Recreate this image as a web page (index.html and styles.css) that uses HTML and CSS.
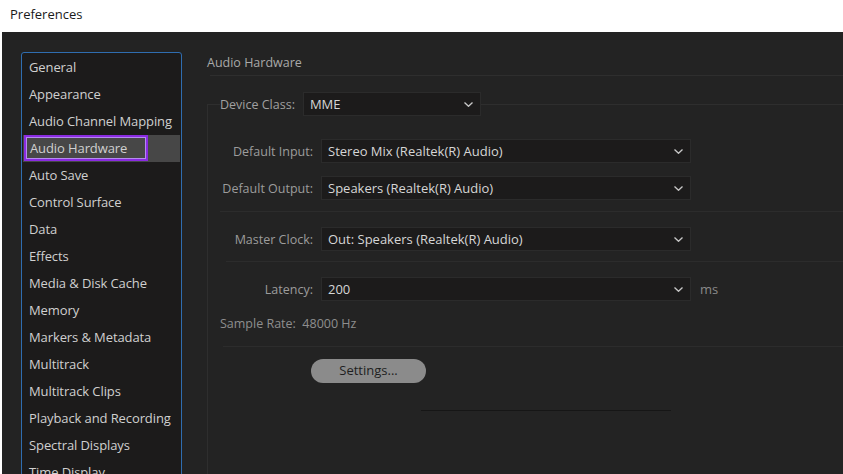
FILE: index.html
```html
<!DOCTYPE html>
<html>
<head>
<meta charset="utf-8">
<link rel="stylesheet" href="styles.css">
</head>
<body>
<div class="titlebar">Preferences</div>
<div class="window">
  <div class="sidebar">
    <ul class="nav">
      <li>General</li>
      <li>Appearance</li>
      <li>Audio Channel Mapping</li>
      <li class="selected"><span class="focus">Audio Hardware</span></li>
      <li>Auto Save</li>
      <li>Control Surface</li>
      <li>Data</li>
      <li>Effects</li>
      <li>Media &amp; Disk Cache</li>
      <li>Memory</li>
      <li>Markers &amp; Metadata</li>
      <li>Multitrack</li>
      <li>Multitrack Clips</li>
      <li>Playback and Recording</li>
      <li>Spectral Displays</li>
      <li>Time Display</li>
    </ul>
  </div>
  <div class="main">
    <div class="header">Audio Hardware</div>
    <fieldset class="group">
      <legend class="device">
        <span class="dlabel">Device Class:</span>
        <span class="select small"><span class="val">MME</span><svg class="chev" viewBox="0 0 9 5"><path d="M0.5 0.5 L4.5 4.3 L8.5 0.5"/></svg></span>
      </legend>
      <div class="row r-input">
        <span class="label">Default Input:</span>
        <span class="select"><span class="val">Stereo Mix (Realtek(R) Audio)</span><svg class="chev" viewBox="0 0 9 5"><path d="M0.5 0.5 L4.5 4.3 L8.5 0.5"/></svg></span>
      </div>
      <div class="row r-output">
        <span class="label">Default Output:</span>
        <span class="select"><span class="val">Speakers (Realtek(R) Audio)</span><svg class="chev" viewBox="0 0 9 5"><path d="M0.5 0.5 L4.5 4.3 L8.5 0.5"/></svg></span>
      </div>
      <div class="sep s1"></div>
      <div class="row r-clock">
        <span class="label">Master Clock:</span>
        <span class="select"><span class="val">Out: Speakers (Realtek(R) Audio)</span><svg class="chev" viewBox="0 0 9 5"><path d="M0.5 0.5 L4.5 4.3 L8.5 0.5"/></svg></span>
      </div>
      <div class="sep s2"></div>
      <div class="row r-latency">
        <span class="label">Latency:</span>
        <span class="select"><span class="val">200</span><svg class="chev" viewBox="0 0 9 5"><path d="M0.5 0.5 L4.5 4.3 L8.5 0.5"/></svg></span>
        <span class="unit">ms</span>
      </div>
      <div class="rate">Sample Rate:&nbsp; 48000 Hz</div>
      <div class="sep s3"></div>
      <div class="btnrow"><span class="btn">Settings...</span></div>
      <div class="darkline"></div>
    </fieldset>
  </div>
</div>
</body>
</html>
```
FILE: styles.css
```css
html, body {
  margin: 0;
  padding: 0;
  background: #ffffff;
  overflow: hidden;
  width: 843px;
  height: 474px;
}
body {
  font-family: "Open Sans", "Liberation Sans", sans-serif;
}
.titlebar {
  height: 32px;
  box-sizing: border-box;
  padding: 5px 0 0 10px;
  font-size: 13px;
  color: #1a1a1a;
}
.window {
  margin-left: 2px;
  height: 442px;
  background: #232323;
  display: flex;
  overflow: hidden;
}
.sidebar {
  width: 205px;
  flex: none;
  padding: 20px 0 0 19px;
  box-sizing: border-box;
}
.nav {
  list-style: none;
  margin: 0;
  padding: 1px 1px 0 1px;
  width: 161px;
  height: 460px;
  box-sizing: border-box;
  border: 1px solid #2f6db0;
  border-radius: 3px;
  background: #1c1b1b;
}
.nav li {
  height: 27px;
  line-height: 27px;
  padding-left: 6px;
  font-size: 13px;
  color: #d0d0d0;
  white-space: nowrap;
  letter-spacing: -0.1px;
}
.nav li.selected {
  background: #474747;
  padding-left: 1px;
}
.focus {
  display: inline-block;
  height: 26px;
  line-height: 22px;
  box-sizing: border-box;
  border: 2px solid #8a2be2;
  box-shadow: inset 0 0 0 1px #b68af0;
  padding: 0 19px 0 4px;
  vertical-align: top;
}
.main {
  flex: 1;
  position: relative;
  color: #9c9c9c;
  font-size: 12.5px;
}
.header {
  padding-top: 23px;
  height: 20px;
  line-height: 16px;
  color: #a9a9a9;
  border-bottom: 1px solid #2e2e2e;
  margin-left: 3px;
  text-indent: -3px;
}
.group {
  margin: 16px 0 0 0;
  padding: 0 0 0 12px;
  border: none;
  border-top: 1px solid #2e2e2e;
  border-left: 1px solid #2e2e2e;
  min-width: 0;
  height: 400px;
}
.device {
  padding: 0;
  margin-left: 0;
  display: flex;
  align-items: center;
  height: 24px;
}
.dlabel {
  color: #a0a0a0;
  margin-right: 8px;
}
.select {
  display: inline-flex;
  align-items: center;
  justify-content: space-between;
  width: 370px;
  height: 24px;
  box-sizing: border-box;
  background: #1c1b1b;
  border: 1px solid #2b2b2b;
  padding: 0 7px 0 6px;
  color: #d6d6d6;
  font-size: 13px;
}
.select.small {
  width: 178px;
}
.chev {
  width: 9px;
  height: 5px;
  fill: none;
  stroke: #c8c8c8;
  stroke-width: 1.3;
}
.row {
  display: flex;
  align-items: center;
  height: 24px;
}
.label {
  width: 93px;
  text-align: right;
  margin-right: 8px;
  color: #9c9c9c;
  flex: none;
  white-space: nowrap;
}
.r-input { margin-top: 23px; }
.r-output { margin-top: 13px; }
.s1 { margin-top: 11px; }
.r-clock { margin-top: 15px; }
.s2 { margin-top: 10px; margin-left: 6px; }
.r-latency { margin-top: 15px; }
.unit {
  margin-left: 9px;
  color: #8a8a8a;
  font-size: 13px;
}
.sep {
  height: 1px;
  background: #2c2c2c;
}
.s3 { margin-left: 3px; margin-top: 14px; }
.rate {
  margin-top: 15px;
  height: 16px;
  line-height: 16px;
  color: #8e8e8e;
}
.btnrow {
  margin-top: 12px;
  padding-left: 91px;
  height: 24px;
}
.btn {
  display: inline-block;
  width: 115px;
  height: 24px;
  line-height: 23px;
  text-align: center;
  background: #8b8b8b;
  border-radius: 12px;
  color: #1f1f1f;
  font-size: 13px;
}
.darkline {
  margin: 27px 0 0 201px;
  width: 250px;
  height: 1px;
  background: #161616;
}
```
